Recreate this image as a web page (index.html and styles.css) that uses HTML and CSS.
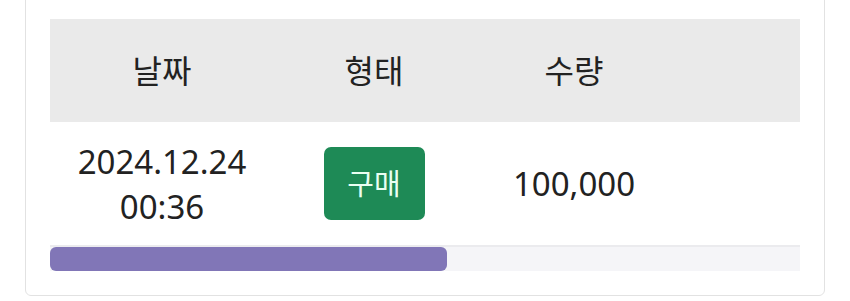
FILE: index.html
```html
<!DOCTYPE html>
<html lang="ko">
<head>
  <meta charset="UTF-8">
  <title>거래 내역</title>
  <link rel="stylesheet" href="styles.css">
</head>
<body>
  <div class="history-card">
    <div class="table-scroll">
      <table class="history-table">
        <thead>
          <tr>
            <th class="col-date">날짜</th>
            <th class="col-type">형태</th>
            <th class="col-amount">수량</th>
            <th class="col-rest"></th>
          </tr>
        </thead>
        <tbody>
          <tr>
            <td class="col-date">2024.12.24<br>00:36</td>
            <td class="col-type"><span class="type-badge">구매</span></td>
            <td class="col-amount">100,000</td>
            <td class="col-rest"></td>
          </tr>
        </tbody>
      </table>
    </div>
    <!-- 가로 스크롤 표시 -->
    <div class="scroll-track">
      <div class="scroll-thumb"></div>
    </div>
  </div>
</body>
</html>
```

FILE: styles.css
```css
body {
  margin: 0;
  background: #fff;
  color: #222;
  font-family: "Noto Sans", "Noto Sans CJK KR", sans-serif;
}
.history-card {
  box-sizing: border-box;
  width: 800px;
  margin: -6px 0 0 25px;
  padding: 24px;
  border: 1px solid #e2e2e2;
  border-radius: 6px;
  background: #fff;
}
.table-scroll {
  overflow: hidden;
}
.history-table {
  border-collapse: collapse;
  width: 1417px;
  table-layout: fixed;
}
.history-table th,
.history-table td {
  padding: 0;
  text-align: center;
  font-size: 33px;
  line-height: 45px;
  vertical-align: middle;
}
.history-table th {
  height: 103px;
  background: #eaeaea;
  font-weight: 400;
  font-size: 32px;
}
.history-table td {
  height: 123px;
}
.col-date { width: 224px; }
.col-type { width: 200px; }
.col-amount { width: 200px; }
.type-badge {
  display: inline-block;
  width: 101px;
  height: 73px;
  line-height: 73px;
  border-radius: 7px;
  background: #1e8a56;
  color: #eafff2;
  font-size: 29px;
}
.scroll-track {
  height: 24px;
  border-top: 2px solid #ebebee;
  background: #f5f5f8;
}
.scroll-thumb {
  width: 397px;
  height: 24px;
  border-radius: 6px;
  background: #8176b7;
}
```
